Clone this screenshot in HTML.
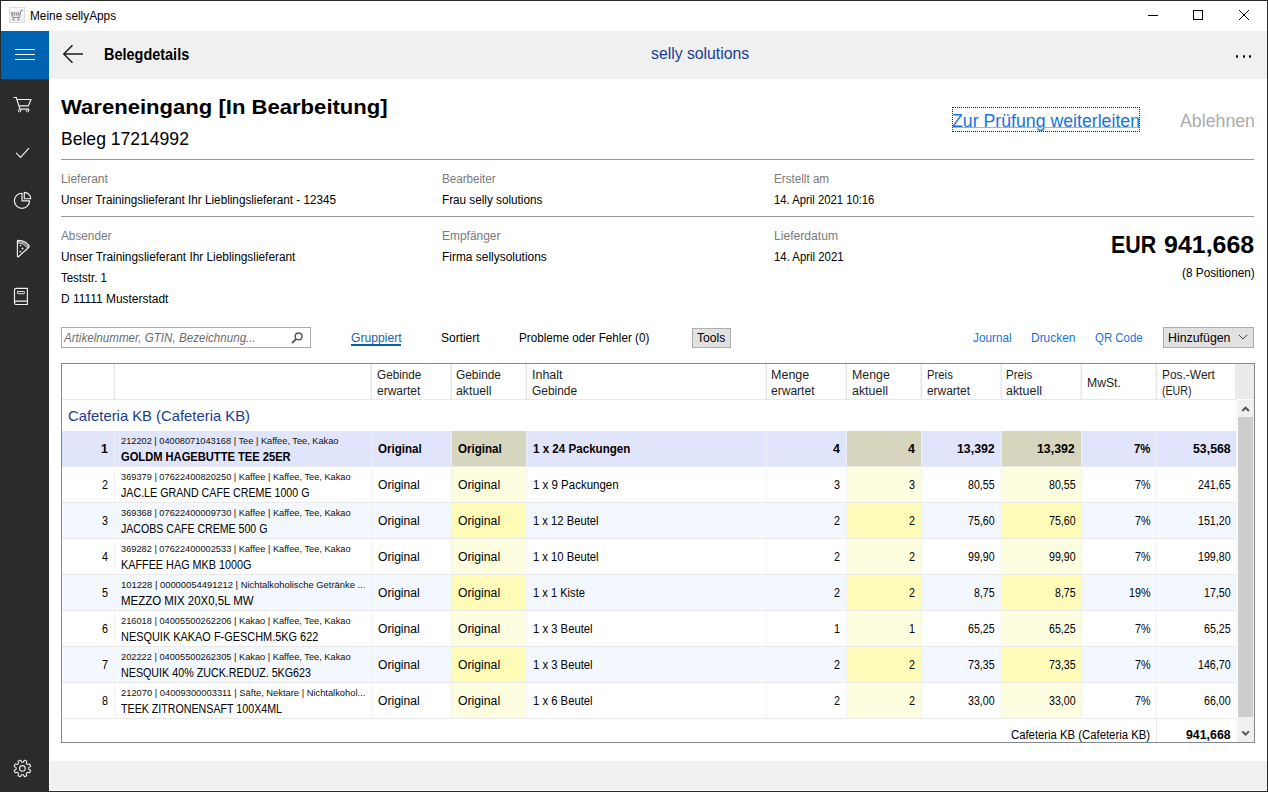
<!DOCTYPE html>
<html lang="de"><head><meta charset="utf-8"><title>Meine sellyApps</title>
<style>
html,body{margin:0;padding:0}
body{width:1268px;height:792px;overflow:hidden;position:relative;background:#fff;font-family:'Liberation Sans', sans-serif;color:#000}
.t{position:absolute;white-space:pre;line-height:1;transform-origin:0 0;display:block}
.b{position:absolute}
svg{position:absolute;overflow:visible}
</style></head><body>
<div class="b" style="left:49px;top:31px;width:1218px;height:48px;background:#f0f0f0;"></div>
<div class="b" style="left:1px;top:31px;width:48px;height:48px;background:#0063b1;"></div>
<div class="b" style="left:1px;top:79px;width:48px;height:712px;background:#2b2b2b;"></div>
<div class="b" style="left:50px;top:761px;width:1217px;height:29px;background:#f0f0f0;"></div>
<div class="b" style="left:0px;top:0px;width:1268px;height:1px;background:#2a2a2a;"></div>
<div class="b" style="left:0px;top:0px;width:1px;height:792px;background:#2a2a2a;"></div>
<div class="b" style="left:1267px;top:0px;width:1px;height:792px;background:#2a2a2a;"></div>
<div class="b" style="left:0px;top:791px;width:1268px;height:1px;background:#2a2a2a;"></div>
<div class="b" style="left:15px;top:49px;width:20px;height:1px;background:#fff;"></div>
<div class="b" style="left:15px;top:54px;width:20px;height:1px;background:#fff;"></div>
<div class="b" style="left:15px;top:59px;width:20px;height:1px;background:#fff;"></div>
<div class="b" style="left:61px;top:159px;width:1193px;height:1px;background:#9a9a9a;"></div>
<div class="b" style="left:61px;top:216px;width:1193px;height:1px;background:#9a9a9a;"></div>
<div class="b" style="left:61px;top:327px;width:250px;height:21px;background:#fff;box-sizing:border-box;border:1px solid #ababab"></div>
<div class="b" style="left:351px;top:344px;width:50px;height:2px;background:#0063b1;"></div>
<div class="b" style="left:692px;top:328px;width:39px;height:20px;background:#e1e1e1;box-sizing:border-box;border:1px solid #adadad"></div>
<div class="b" style="left:1163px;top:327px;width:91px;height:21px;background:#e1e1e1;box-sizing:border-box;border:1px solid #adadad"></div>
<div class="b" style="left:952px;top:107px;width:188px;height:25px;background:transparent;box-sizing:border-box;border:1px dotted #222"></div>
<div class="b" style="left:61px;top:363px;width:1194px;height:380px;background:#fff;box-sizing:border-box;border:1px solid #828790"></div>
<div class="b" style="left:1235px;top:364px;width:19px;height:35px;background:#ebebeb;"></div>
<div class="b" style="left:62px;top:431px;width:1174px;height:35px;background:#e1e5fc;"></div>
<div class="b" style="left:452px;top:431px;width:74px;height:35px;background:#d6d5bd;"></div>
<div class="b" style="left:847px;top:431px;width:74px;height:35px;background:#d6d5bd;"></div>
<div class="b" style="left:1002px;top:431px;width:79px;height:35px;background:#d6d5bd;"></div>
<div class="b" style="left:62px;top:466px;width:1174px;height:1px;background:#e9e9e9;"></div>
<div class="b" style="left:452px;top:467px;width:74px;height:35px;background:#fdfde0;"></div>
<div class="b" style="left:847px;top:467px;width:74px;height:35px;background:#fdfde0;"></div>
<div class="b" style="left:1002px;top:467px;width:79px;height:35px;background:#fdfde0;"></div>
<div class="b" style="left:62px;top:502px;width:1174px;height:1px;background:#e9e9e9;"></div>
<div class="b" style="left:62px;top:503px;width:1174px;height:35px;background:#f3f7fe;"></div>
<div class="b" style="left:452px;top:503px;width:74px;height:35px;background:#fefcb8;"></div>
<div class="b" style="left:847px;top:503px;width:74px;height:35px;background:#fefcb8;"></div>
<div class="b" style="left:1002px;top:503px;width:79px;height:35px;background:#fefcb8;"></div>
<div class="b" style="left:62px;top:538px;width:1174px;height:1px;background:#e9e9e9;"></div>
<div class="b" style="left:452px;top:539px;width:74px;height:35px;background:#fdfde0;"></div>
<div class="b" style="left:847px;top:539px;width:74px;height:35px;background:#fdfde0;"></div>
<div class="b" style="left:1002px;top:539px;width:79px;height:35px;background:#fdfde0;"></div>
<div class="b" style="left:62px;top:574px;width:1174px;height:1px;background:#e9e9e9;"></div>
<div class="b" style="left:62px;top:575px;width:1174px;height:35px;background:#f3f7fe;"></div>
<div class="b" style="left:452px;top:575px;width:74px;height:35px;background:#fefcb8;"></div>
<div class="b" style="left:847px;top:575px;width:74px;height:35px;background:#fefcb8;"></div>
<div class="b" style="left:1002px;top:575px;width:79px;height:35px;background:#fefcb8;"></div>
<div class="b" style="left:62px;top:610px;width:1174px;height:1px;background:#e9e9e9;"></div>
<div class="b" style="left:452px;top:611px;width:74px;height:35px;background:#fdfde0;"></div>
<div class="b" style="left:847px;top:611px;width:74px;height:35px;background:#fdfde0;"></div>
<div class="b" style="left:1002px;top:611px;width:79px;height:35px;background:#fdfde0;"></div>
<div class="b" style="left:62px;top:646px;width:1174px;height:1px;background:#e9e9e9;"></div>
<div class="b" style="left:62px;top:647px;width:1174px;height:35px;background:#f3f7fe;"></div>
<div class="b" style="left:452px;top:647px;width:74px;height:35px;background:#fefcb8;"></div>
<div class="b" style="left:847px;top:647px;width:74px;height:35px;background:#fefcb8;"></div>
<div class="b" style="left:1002px;top:647px;width:79px;height:35px;background:#fefcb8;"></div>
<div class="b" style="left:62px;top:682px;width:1174px;height:1px;background:#e9e9e9;"></div>
<div class="b" style="left:452px;top:683px;width:74px;height:35px;background:#fdfde0;"></div>
<div class="b" style="left:847px;top:683px;width:74px;height:35px;background:#fdfde0;"></div>
<div class="b" style="left:1002px;top:683px;width:79px;height:35px;background:#fdfde0;"></div>
<div class="b" style="left:62px;top:718px;width:1174px;height:1px;background:#e9e9e9;"></div>
<div class="b" style="left:62px;top:399px;width:1174px;height:1px;background:#e9e9e9;"></div>
<div class="b" style="left:113px;top:364px;width:1px;height:35px;background:#f4f4f4;"></div>
<div class="b" style="left:114px;top:364px;width:1px;height:35px;background:#e6e6e6;"></div>
<div class="b" style="left:370px;top:364px;width:1px;height:35px;background:#f4f4f4;"></div>
<div class="b" style="left:371px;top:364px;width:1px;height:35px;background:#e6e6e6;"></div>
<div class="b" style="left:450px;top:364px;width:1px;height:35px;background:#f4f4f4;"></div>
<div class="b" style="left:451px;top:364px;width:1px;height:35px;background:#e6e6e6;"></div>
<div class="b" style="left:525px;top:364px;width:1px;height:35px;background:#f4f4f4;"></div>
<div class="b" style="left:526px;top:364px;width:1px;height:35px;background:#e6e6e6;"></div>
<div class="b" style="left:765px;top:364px;width:1px;height:35px;background:#f4f4f4;"></div>
<div class="b" style="left:766px;top:364px;width:1px;height:35px;background:#e6e6e6;"></div>
<div class="b" style="left:845px;top:364px;width:1px;height:35px;background:#f4f4f4;"></div>
<div class="b" style="left:846px;top:364px;width:1px;height:35px;background:#e6e6e6;"></div>
<div class="b" style="left:920px;top:364px;width:1px;height:35px;background:#f4f4f4;"></div>
<div class="b" style="left:921px;top:364px;width:1px;height:35px;background:#e6e6e6;"></div>
<div class="b" style="left:1000px;top:364px;width:1px;height:35px;background:#f4f4f4;"></div>
<div class="b" style="left:1001px;top:364px;width:1px;height:35px;background:#e6e6e6;"></div>
<div class="b" style="left:1080px;top:364px;width:1px;height:35px;background:#f4f4f4;"></div>
<div class="b" style="left:1081px;top:364px;width:1px;height:35px;background:#e6e6e6;"></div>
<div class="b" style="left:1155px;top:364px;width:1px;height:35px;background:#f4f4f4;"></div>
<div class="b" style="left:1156px;top:364px;width:1px;height:35px;background:#e6e6e6;"></div>
<div class="b" style="left:114px;top:431px;width:1px;height:288px;background:rgba(240,240,243,0.8);"></div>
<div class="b" style="left:371px;top:431px;width:1px;height:288px;background:rgba(240,240,243,0.8);"></div>
<div class="b" style="left:451px;top:431px;width:1px;height:288px;background:rgba(240,240,243,0.8);"></div>
<div class="b" style="left:526px;top:431px;width:1px;height:288px;background:rgba(240,240,243,0.8);"></div>
<div class="b" style="left:766px;top:431px;width:1px;height:288px;background:rgba(240,240,243,0.8);"></div>
<div class="b" style="left:846px;top:431px;width:1px;height:288px;background:rgba(240,240,243,0.8);"></div>
<div class="b" style="left:921px;top:431px;width:1px;height:288px;background:rgba(240,240,243,0.8);"></div>
<div class="b" style="left:1001px;top:431px;width:1px;height:288px;background:rgba(240,240,243,0.8);"></div>
<div class="b" style="left:1081px;top:431px;width:1px;height:288px;background:rgba(240,240,243,0.8);"></div>
<div class="b" style="left:1156px;top:431px;width:1px;height:288px;background:rgba(240,240,243,0.8);"></div>
<div class="b" style="left:1236px;top:431px;width:1px;height:288px;background:rgba(240,240,243,0.8);"></div>
<div class="b" style="left:1156px;top:719px;width:1px;height:23px;background:#e9e9e9;"></div>
<div class="b" style="left:1236px;top:400px;width:1px;height:342px;background:#f6f6f6;"></div>
<div class="b" style="left:1238px;top:400px;width:16px;height:342px;background:#f0f0f0;"></div>
<div class="b" style="left:1238px;top:417px;width:15px;height:300px;background:#cdcdcd;"></div>
<svg style="left:1238px;top:400px" width="16" height="17"><path d="M4.3 11 L7.6 7.7 L10.9 11" fill="none" stroke="#555" stroke-width="2"/></svg>
<svg style="left:1238px;top:725px" width="16" height="17"><path d="M4.3 6.4 L7.6 9.7 L10.9 6.4" fill="none" stroke="#555" stroke-width="2"/></svg>
<svg style="left:60px;top:42px" width="28" height="24"><path d="M23 12 H4.5 M12.5 3.2 L3.8 12 L12.5 20.8" fill="none" stroke="#1a1a1a" stroke-width="1.5"/></svg>
<svg style="left:1140px;top:0" width="127" height="31" shape-rendering="crispEdges"><path d="M8 15.5 H18" stroke="#000" stroke-width="1" fill="none"/><rect x="53.5" y="10.5" width="9" height="9" fill="none" stroke="#000"/></svg>
<svg style="left:1238px;top:9px" width="12" height="12"><path d="M1 1 L11 11 M11 1 L1 11" stroke="#000" stroke-width="1" fill="none"/></svg>
<div class="b" style="left:1236px;top:55.3px;width:2.4px;height:2.4px;border-radius:50%;background:#111"></div>
<div class="b" style="left:1242.5px;top:55.3px;width:2.4px;height:2.4px;border-radius:50%;background:#111"></div>
<div class="b" style="left:1249px;top:55.3px;width:2.4px;height:2.4px;border-radius:50%;background:#111"></div>
<svg style="left:1238px;top:333px" width="10" height="8"><path d="M0.8 1.8 L5 6 L9.2 1.8" fill="none" stroke="#444" stroke-width="1"/></svg>
<svg style="left:290.3px;top:330.6px" width="14" height="14"><circle cx="8.6" cy="5.4" r="3.4" fill="none" stroke="#555" stroke-width="1.4"/><path d="M6.2 7.8 L2 12" stroke="#555" stroke-width="1.8"/></svg>
<svg style="left:9px;top:7px" width="16" height="16"><defs><linearGradient id="tg" x1="0" y1="0" x2="0" y2="1"><stop offset="0" stop-color="#fdfdfd"/><stop offset="1" stop-color="#ececec"/></linearGradient></defs><rect x="0.5" y="0.5" width="15" height="15" fill="url(#tg)" stroke="#dedede" stroke-width="1"/><path d="M14 3.3 H12 L10.4 10.4 H3.6 L2.2 5.3" fill="none" stroke="#858585" stroke-width="1"/><path d="M3.5 5.3 L4.3 8.6 M5.6 5.3 L5.9 8.6 M7.6 5.3 V8.6 M9.6 5.3 L9.3 8.6" stroke="#8c8c8c" stroke-width="1.1" fill="none"/><path d="M2.2 5.3 H10.8" stroke="#b5b5b5" stroke-width="0.8"/><circle cx="4.5" cy="12.5" r="1.1" fill="#858585"/><circle cx="9.5" cy="12.5" r="1.1" fill="#858585"/></svg>
<svg style="left:0;top:0" width="49" height="792" fill="none" stroke="#f0f0f0" stroke-width="1.15" stroke-linecap="round" stroke-linejoin="round">
<path d="M14 97.5 H16.3 L19.9 109.1 H28.9 M17.2 99.5 H31 L28.4 105.9 H19.3"/>
<circle cx="19.5" cy="110.7" r="1.25" stroke-width="1"/><circle cx="27.5" cy="110.7" r="1.25" stroke-width="1"/>
<path d="M16.1 152.9 L20.5 157.3 L29 148.2" stroke-linecap="butt" stroke-linejoin="miter"/>
<path d="M22 193.2 A7.6 7.6 0 1 0 29.6 200.8 H22 Z"/>
<path d="M24.3 192.4 V198.7 H30.7 A6.4 6.4 0 0 0 24.3 192.4 Z"/>
<path d="M17.4 241 Q17.4 240.2 18.3 240.2 C23 240.4 27.5 242.8 29.3 246.5 L27.8 248.2 L18.4 256.7 Q17.4 257.2 17.4 256 Z"/>
<path d="M17.9 242.8 C22 243 25.6 245 27.6 248.1 M18 241.5 C22.6 241.7 26.6 243.9 28.5 247.3" stroke-width="0.9"/>
<circle cx="20.4" cy="245.5" r="0.85" fill="#f0f0f0" stroke="none"/><circle cx="22.5" cy="248.5" r="0.95" fill="#f0f0f0" stroke="none"/><circle cx="20.4" cy="251.7" r="0.85" fill="#f0f0f0" stroke="none"/><circle cx="26" cy="250.2" r="0.9" fill="#bbb" stroke="none"/>
<path d="M27.4 288.4 H16 Q14.5 288.4 14.5 289.9 V303 Q14.5 304.5 16 304.5 H27.4 Z M14.6 302.4 Q14.6 301.1 16 301.1 H27.4"/>
<rect x="17.4" y="291.5" width="7" height="2.2" rx="0.6" stroke-width="0.95"/>
<path d="M28.65 769.17 L30.65 770.44 L29.68 772.79 L27.37 772.28 L26.28 773.37 L26.79 775.68 L24.44 776.65 L23.17 774.65 L21.63 774.65 L20.36 776.65 L18.01 775.68 L18.52 773.37 L17.43 772.28 L15.12 772.79 L14.15 770.44 L16.15 769.17 L16.15 767.63 L14.15 766.36 L15.12 764.01 L17.43 764.52 L18.52 763.43 L18.01 761.12 L20.36 760.15 L21.63 762.15 L23.17 762.15 L24.44 760.15 L26.79 761.12 L26.28 763.43 L27.37 764.52 L29.68 764.01 L30.65 766.36 L28.65 767.63 Z" stroke-width="1.05"/><circle cx="22.4" cy="768.4" r="2.8" stroke-width="1.05"/>
</svg>
<span class="t" style="left:30.1px;top:9.8px;font-size:12px;transform:scaleX(0.9854)">Meine sellyApps</span>
<span class="t" style="left:104.1px;top:46.9px;font-size:15.7px;font-weight:700;transform:scaleX(0.9219)">Belegdetails</span>
<span class="t" style="left:650.9px;top:46.1px;font-size:16px;color:#1b3c96;transform:scaleX(0.9848)">selly solutions</span>
<span class="t" style="left:61.0px;top:96.9px;font-size:20.8px;font-weight:700;transform:scaleX(1.0616)">Wareneingang [In Bearbeitung]</span>
<span class="t" style="left:61.0px;top:130.0px;font-size:18.2px;transform:scaleX(0.9653)">Beleg 17214992</span>
<span class="t" style="left:951.9px;top:111.8px;font-size:18px;color:#1873dd;text-decoration:underline;text-decoration-thickness:1px;text-underline-offset:0px;text-decoration-color:rgba(24,115,221,0.5);transform:scaleX(0.9838)">Zur Prüfung weiterleiten</span>
<span class="t" style="left:1179.9px;top:111.8px;font-size:18px;color:#ababab;transform:scaleX(0.9858)">Ablehnen</span>
<span class="t" style="left:61.0px;top:172.8px;font-size:12px;color:#7a7a7a;transform:scaleX(1.0042)">Lieferant</span>
<span class="t" style="left:61.0px;top:193.8px;font-size:12px;transform:scaleX(0.9769)">Unser Trainingslieferant Ihr Lieblingslieferant - 12345</span>
<span class="t" style="left:441.6px;top:172.8px;font-size:12px;color:#7a7a7a;transform:scaleX(0.9698)">Bearbeiter</span>
<span class="t" style="left:441.6px;top:193.8px;font-size:12px;transform:scaleX(0.9774)">Frau selly solutions</span>
<span class="t" style="left:773.7px;top:172.8px;font-size:12px;color:#7a7a7a;transform:scaleX(0.9720)">Erstellt am</span>
<span class="t" style="left:773.7px;top:193.8px;font-size:12px;transform:scaleX(0.9404)">14. April 2021 10:16</span>
<span class="t" style="left:61.0px;top:229.8px;font-size:12px;color:#7a7a7a;transform:scaleX(0.9810)">Absender</span>
<span class="t" style="left:61.0px;top:250.8px;font-size:12px;transform:scaleX(0.9871)">Unser Trainingslieferant Ihr Lieblingslieferant</span>
<span class="t" style="left:61.0px;top:271.8px;font-size:12px;transform:scaleX(0.9556)">Teststr. 1</span>
<span class="t" style="left:61.0px;top:292.8px;font-size:12px;transform:scaleX(0.9959)">D 11111 Musterstadt</span>
<span class="t" style="left:441.6px;top:229.8px;font-size:12px;color:#7a7a7a;transform:scaleX(0.9965)">Empfänger</span>
<span class="t" style="left:441.6px;top:250.8px;font-size:12px;transform:scaleX(0.9945)">Firma sellysolutions</span>
<span class="t" style="left:773.7px;top:229.8px;font-size:12px;color:#7a7a7a;transform:scaleX(1.0099)">Lieferdatum</span>
<span class="t" style="left:773.7px;top:250.8px;font-size:12px;transform:scaleX(0.9484)">14. April 2021</span>
<span class="t" style="left:1111.1px;top:233.1px;font-size:24.4px;font-weight:700;transform:scaleX(0.8777)">EUR</span>
<span class="t" style="left:1163.7px;top:233.1px;font-size:24.4px;font-weight:700;transform:scaleX(1.0230)">941,668</span>
<span class="t" style="left:1181.6px;top:267.2px;font-size:12px;transform:scaleX(0.9832)">(8 Positionen)</span>
<span class="t" style="left:64.4px;top:331.8px;font-size:12px;color:#6d6d6d;font-style:italic;transform:scaleX(0.9683)">Artikelnummer, GTIN, Bezeichnung...</span>
<span class="t" style="left:350.6px;top:332.2px;font-size:12px;color:#1a5fb4;transform:scaleX(1.0134)">Gruppiert</span>
<span class="t" style="left:441.1px;top:332.2px;font-size:12px;transform:scaleX(0.9977)">Sortiert</span>
<span class="t" style="left:519.4px;top:332.2px;font-size:12px;transform:scaleX(0.9719)">Probleme oder Fehler (0)</span>
<span class="t" style="left:697.4px;top:332.2px;font-size:12px;transform:scaleX(1.0102)">Tools</span>
<span class="t" style="left:973.0px;top:332.2px;font-size:12px;color:#1873dd;transform:scaleX(0.9832)">Journal</span>
<span class="t" style="left:1031.2px;top:332.2px;font-size:12px;color:#1873dd;transform:scaleX(0.9958)">Drucken</span>
<span class="t" style="left:1095.0px;top:332.2px;font-size:12px;color:#1873dd;transform:scaleX(0.9534)">QR Code</span>
<span class="t" style="left:1167.9px;top:332.2px;font-size:12px;transform:scaleX(1.0293)">Hinzufügen</span>
<span class="t" style="left:377.0px;top:368.8px;font-size:12px;color:#1e1e1e;transform:scaleX(0.9785)">Gebinde</span>
<span class="t" style="left:377.0px;top:384.8px;font-size:12px;color:#1e1e1e;transform:scaleX(1.0009)">erwartet</span>
<span class="t" style="left:456.4px;top:368.8px;font-size:12px;color:#1e1e1e;transform:scaleX(0.9917)">Gebinde</span>
<span class="t" style="left:456.4px;top:384.8px;font-size:12px;color:#1e1e1e;transform:scaleX(1.0234)">aktuell</span>
<span class="t" style="left:531.6px;top:368.8px;font-size:12px;color:#1e1e1e;transform:scaleX(1.0389)">Inhalt</span>
<span class="t" style="left:531.6px;top:384.8px;font-size:12px;color:#1e1e1e;transform:scaleX(0.9939)">Gebinde</span>
<span class="t" style="left:771.4px;top:368.8px;font-size:12px;color:#1e1e1e;transform:scaleX(1.0435)">Menge</span>
<span class="t" style="left:771.4px;top:384.8px;font-size:12px;color:#1e1e1e;transform:scaleX(1.0032)">erwartet</span>
<span class="t" style="left:851.5px;top:368.8px;font-size:12px;color:#1e1e1e;transform:scaleX(1.0326)">Menge</span>
<span class="t" style="left:851.5px;top:384.8px;font-size:12px;color:#1e1e1e;transform:scaleX(1.0350)">aktuell</span>
<span class="t" style="left:926.9px;top:368.8px;font-size:12px;color:#1e1e1e;transform:scaleX(0.9435)">Preis</span>
<span class="t" style="left:926.9px;top:384.8px;font-size:12px;color:#1e1e1e;transform:scaleX(0.9917)">erwartet</span>
<span class="t" style="left:1006.2px;top:368.8px;font-size:12px;color:#1e1e1e;transform:scaleX(0.9582)">Preis</span>
<span class="t" style="left:1006.2px;top:384.8px;font-size:12px;color:#1e1e1e;transform:scaleX(1.0350)">aktuell</span>
<span class="t" style="left:1086.7px;top:376.8px;font-size:12px;color:#1e1e1e;transform:scaleX(1.0167)">MwSt.</span>
<span class="t" style="left:1161.6px;top:368.8px;font-size:12px;color:#1e1e1e;transform:scaleX(0.9939)">Pos.-Wert</span>
<span class="t" style="left:1161.6px;top:384.8px;font-size:12px;color:#1e1e1e;transform:scaleX(0.8851)">(EUR)</span>
<span class="t" style="left:68.0px;top:409.1px;font-size:14.5px;color:#1b3c96;transform:scaleX(1.0218)">Cafeteria KB (Cafeteria KB)</span>
<span class="t" style="left:100.7px;top:443.3px;font-size:12px;font-weight:700;transform:scaleX(1.0348)">1</span>
<span class="t" style="left:120.6px;top:435.6px;font-size:9.5px;color:#111;transform:scaleX(0.9710)">212202 | 04008071043168 | Tee | Kaffee, Tee, Kakao</span>
<span class="t" style="left:120.6px;top:450.5px;font-size:12px;font-weight:700;transform:scaleX(0.9284)">GOLDM HAGEBUTTE TEE 25ER</span>
<span class="t" style="left:377.7px;top:443.3px;font-size:12px;font-weight:700;transform:scaleX(0.9637)">Original</span>
<span class="t" style="left:457.7px;top:443.3px;font-size:12px;font-weight:700;transform:scaleX(0.9637)">Original</span>
<span class="t" style="left:533.4px;top:443.3px;font-size:12px;font-weight:700;transform:scaleX(0.9670)">1 x 24 Packungen</span>
<span class="t" style="left:833.3px;top:443.3px;font-size:12px;font-weight:700;transform:scaleX(1.0348)">4</span>
<span class="t" style="left:908.3px;top:443.3px;font-size:12px;font-weight:700;transform:scaleX(1.0348)">4</span>
<span class="t" style="left:957.3px;top:443.3px;font-size:12px;font-weight:700;transform:scaleX(1.0272)">13,392</span>
<span class="t" style="left:1037.4px;top:443.3px;font-size:12px;font-weight:700;transform:scaleX(1.0272)">13,392</span>
<span class="t" style="left:1133.9px;top:443.3px;font-size:12px;font-weight:700;transform:scaleX(0.9467)">7%</span>
<span class="t" style="left:1192.5px;top:443.3px;font-size:12px;font-weight:700;transform:scaleX(1.0272)">53,568</span>
<span class="t" style="left:101.6px;top:479.3px;font-size:12px;transform:scaleX(0.8972)">2</span>
<span class="t" style="left:120.6px;top:471.6px;font-size:9.5px;color:#111;transform:scaleX(0.9723)">369379 | 07622400820250 | Kaffee | Kaffee, Tee, Kakao</span>
<span class="t" style="left:120.6px;top:486.5px;font-size:12px;transform:scaleX(0.8889)">JAC.LE GRAND CAFE CREME 1000 G</span>
<span class="t" style="left:378.2px;top:479.3px;font-size:12px;transform:scaleX(1.0082)">Original</span>
<span class="t" style="left:458.0px;top:479.3px;font-size:12px;transform:scaleX(1.0179)">Original</span>
<span class="t" style="left:533.4px;top:479.3px;font-size:12px;transform:scaleX(0.9574)">1 x 9 Packungen</span>
<span class="t" style="left:834.2px;top:479.3px;font-size:12px;transform:scaleX(0.8972)">3</span>
<span class="t" style="left:909.2px;top:479.3px;font-size:12px;transform:scaleX(0.8972)">3</span>
<span class="t" style="left:968.4px;top:479.3px;font-size:12px;transform:scaleX(0.8857)">80,55</span>
<span class="t" style="left:1048.5px;top:479.3px;font-size:12px;transform:scaleX(0.8857)">80,55</span>
<span class="t" style="left:1134.8px;top:479.3px;font-size:12px;transform:scaleX(0.8937)">7%</span>
<span class="t" style="left:1197.6px;top:479.3px;font-size:12px;transform:scaleX(0.8882)">241,65</span>
<span class="t" style="left:101.6px;top:515.3px;font-size:12px;transform:scaleX(0.8972)">3</span>
<span class="t" style="left:120.6px;top:507.6px;font-size:9.5px;color:#111;transform:scaleX(0.9723)">369368 | 07622400009730 | Kaffee | Kaffee, Tee, Kakao</span>
<span class="t" style="left:120.6px;top:522.5px;font-size:12px;transform:scaleX(0.8817)">JACOBS CAFE CREME 500 G</span>
<span class="t" style="left:378.2px;top:515.3px;font-size:12px;transform:scaleX(1.0082)">Original</span>
<span class="t" style="left:458.0px;top:515.3px;font-size:12px;transform:scaleX(1.0179)">Original</span>
<span class="t" style="left:533.4px;top:515.3px;font-size:12px;transform:scaleX(0.9363)">1 x 12 Beutel</span>
<span class="t" style="left:834.2px;top:515.3px;font-size:12px;transform:scaleX(0.8972)">2</span>
<span class="t" style="left:909.2px;top:515.3px;font-size:12px;transform:scaleX(0.8972)">2</span>
<span class="t" style="left:968.4px;top:515.3px;font-size:12px;transform:scaleX(0.8857)">75,60</span>
<span class="t" style="left:1048.5px;top:515.3px;font-size:12px;transform:scaleX(0.8857)">75,60</span>
<span class="t" style="left:1134.8px;top:515.3px;font-size:12px;transform:scaleX(0.8937)">7%</span>
<span class="t" style="left:1197.6px;top:515.3px;font-size:12px;transform:scaleX(0.8882)">151,20</span>
<span class="t" style="left:101.6px;top:551.3px;font-size:12px;transform:scaleX(0.8972)">4</span>
<span class="t" style="left:120.6px;top:543.6px;font-size:9.5px;color:#111;transform:scaleX(0.9723)">369282 | 07622400002533 | Kaffee | Kaffee, Tee, Kakao</span>
<span class="t" style="left:120.6px;top:558.5px;font-size:12px;transform:scaleX(0.9017)">KAFFEE HAG MKB 1000G</span>
<span class="t" style="left:378.2px;top:551.3px;font-size:12px;transform:scaleX(1.0082)">Original</span>
<span class="t" style="left:458.0px;top:551.3px;font-size:12px;transform:scaleX(1.0179)">Original</span>
<span class="t" style="left:533.4px;top:551.3px;font-size:12px;transform:scaleX(0.9363)">1 x 10 Beutel</span>
<span class="t" style="left:834.2px;top:551.3px;font-size:12px;transform:scaleX(0.8972)">2</span>
<span class="t" style="left:909.2px;top:551.3px;font-size:12px;transform:scaleX(0.8972)">2</span>
<span class="t" style="left:968.4px;top:551.3px;font-size:12px;transform:scaleX(0.8857)">99,90</span>
<span class="t" style="left:1048.5px;top:551.3px;font-size:12px;transform:scaleX(0.8857)">99,90</span>
<span class="t" style="left:1134.8px;top:551.3px;font-size:12px;transform:scaleX(0.8937)">7%</span>
<span class="t" style="left:1197.6px;top:551.3px;font-size:12px;transform:scaleX(0.8882)">199,80</span>
<span class="t" style="left:101.6px;top:587.3px;font-size:12px;transform:scaleX(0.8972)">5</span>
<span class="t" style="left:120.6px;top:579.6px;font-size:9.5px;color:#111;transform:scaleX(0.9876)">101228 | 00000054491212 | Nichtalkoholische Getränke ...</span>
<span class="t" style="left:120.6px;top:594.5px;font-size:12px;transform:scaleX(0.9538)">MEZZO MIX 20X0,5L MW</span>
<span class="t" style="left:378.2px;top:587.3px;font-size:12px;transform:scaleX(1.0082)">Original</span>
<span class="t" style="left:458.0px;top:587.3px;font-size:12px;transform:scaleX(1.0179)">Original</span>
<span class="t" style="left:533.4px;top:587.3px;font-size:12px;transform:scaleX(0.9263)">1 x 1 Kiste</span>
<span class="t" style="left:834.2px;top:587.3px;font-size:12px;transform:scaleX(0.8972)">2</span>
<span class="t" style="left:909.2px;top:587.3px;font-size:12px;transform:scaleX(0.8972)">2</span>
<span class="t" style="left:974.4px;top:587.3px;font-size:12px;transform:scaleX(0.8819)">8,75</span>
<span class="t" style="left:1054.5px;top:587.3px;font-size:12px;transform:scaleX(0.8819)">8,75</span>
<span class="t" style="left:1128.8px;top:587.3px;font-size:12px;transform:scaleX(0.8947)">19%</span>
<span class="t" style="left:1203.6px;top:587.3px;font-size:12px;transform:scaleX(0.8857)">17,50</span>
<span class="t" style="left:101.6px;top:623.3px;font-size:12px;transform:scaleX(0.8972)">6</span>
<span class="t" style="left:120.6px;top:615.6px;font-size:9.5px;color:#111;transform:scaleX(0.9738)">216018 | 04005500262206 | Kakao | Kaffee, Tee, Kakao</span>
<span class="t" style="left:120.6px;top:630.5px;font-size:12px;transform:scaleX(0.9103)">NESQUIK KAKAO F-GESCHM.5KG 622</span>
<span class="t" style="left:378.2px;top:623.3px;font-size:12px;transform:scaleX(1.0082)">Original</span>
<span class="t" style="left:458.0px;top:623.3px;font-size:12px;transform:scaleX(1.0179)">Original</span>
<span class="t" style="left:533.4px;top:623.3px;font-size:12px;transform:scaleX(0.9404)">1 x 3 Beutel</span>
<span class="t" style="left:834.2px;top:623.3px;font-size:12px;transform:scaleX(0.8972)">1</span>
<span class="t" style="left:909.2px;top:623.3px;font-size:12px;transform:scaleX(0.8972)">1</span>
<span class="t" style="left:968.4px;top:623.3px;font-size:12px;transform:scaleX(0.8857)">65,25</span>
<span class="t" style="left:1048.5px;top:623.3px;font-size:12px;transform:scaleX(0.8857)">65,25</span>
<span class="t" style="left:1134.8px;top:623.3px;font-size:12px;transform:scaleX(0.8937)">7%</span>
<span class="t" style="left:1203.6px;top:623.3px;font-size:12px;transform:scaleX(0.8857)">65,25</span>
<span class="t" style="left:101.6px;top:659.3px;font-size:12px;transform:scaleX(0.8972)">7</span>
<span class="t" style="left:120.6px;top:651.6px;font-size:9.5px;color:#111;transform:scaleX(0.9738)">202222 | 04005500262305 | Kakao | Kaffee, Tee, Kakao</span>
<span class="t" style="left:120.6px;top:666.5px;font-size:12px;transform:scaleX(0.8931)">NESQUIK 40% ZUCK.REDUZ. 5KG623</span>
<span class="t" style="left:378.2px;top:659.3px;font-size:12px;transform:scaleX(1.0082)">Original</span>
<span class="t" style="left:458.0px;top:659.3px;font-size:12px;transform:scaleX(1.0179)">Original</span>
<span class="t" style="left:533.4px;top:659.3px;font-size:12px;transform:scaleX(0.9404)">1 x 3 Beutel</span>
<span class="t" style="left:834.2px;top:659.3px;font-size:12px;transform:scaleX(0.8972)">2</span>
<span class="t" style="left:909.2px;top:659.3px;font-size:12px;transform:scaleX(0.8972)">2</span>
<span class="t" style="left:968.4px;top:659.3px;font-size:12px;transform:scaleX(0.8857)">73,35</span>
<span class="t" style="left:1048.5px;top:659.3px;font-size:12px;transform:scaleX(0.8857)">73,35</span>
<span class="t" style="left:1134.8px;top:659.3px;font-size:12px;transform:scaleX(0.8937)">7%</span>
<span class="t" style="left:1197.6px;top:659.3px;font-size:12px;transform:scaleX(0.8882)">146,70</span>
<span class="t" style="left:101.6px;top:695.3px;font-size:12px;transform:scaleX(0.8972)">8</span>
<span class="t" style="left:120.6px;top:687.6px;font-size:9.5px;color:#111;transform:scaleX(0.9827)">212070 | 04009300003311 | Säfte, Nektare | Nichtalkohol...</span>
<span class="t" style="left:120.6px;top:702.5px;font-size:12px;transform:scaleX(0.8887)">TEEK ZITRONENSAFT 100X4ML</span>
<span class="t" style="left:378.2px;top:695.3px;font-size:12px;transform:scaleX(1.0082)">Original</span>
<span class="t" style="left:458.0px;top:695.3px;font-size:12px;transform:scaleX(1.0179)">Original</span>
<span class="t" style="left:533.4px;top:695.3px;font-size:12px;transform:scaleX(0.9404)">1 x 6 Beutel</span>
<span class="t" style="left:834.2px;top:695.3px;font-size:12px;transform:scaleX(0.8972)">2</span>
<span class="t" style="left:909.2px;top:695.3px;font-size:12px;transform:scaleX(0.8972)">2</span>
<span class="t" style="left:968.4px;top:695.3px;font-size:12px;transform:scaleX(0.8857)">33,00</span>
<span class="t" style="left:1048.5px;top:695.3px;font-size:12px;transform:scaleX(0.8857)">33,00</span>
<span class="t" style="left:1134.8px;top:695.3px;font-size:12px;transform:scaleX(0.8937)">7%</span>
<span class="t" style="left:1203.6px;top:695.3px;font-size:12px;transform:scaleX(0.8857)">66,00</span>
<span class="t" style="left:1010.9px;top:728.8px;font-size:12px;transform:scaleX(0.9430)">Cafeteria KB (Cafeteria KB)</span>
<span class="t" style="left:1185.6px;top:728.8px;font-size:12px;font-weight:700;transform:scaleX(1.0283)">941,668</span>
</body></html>
